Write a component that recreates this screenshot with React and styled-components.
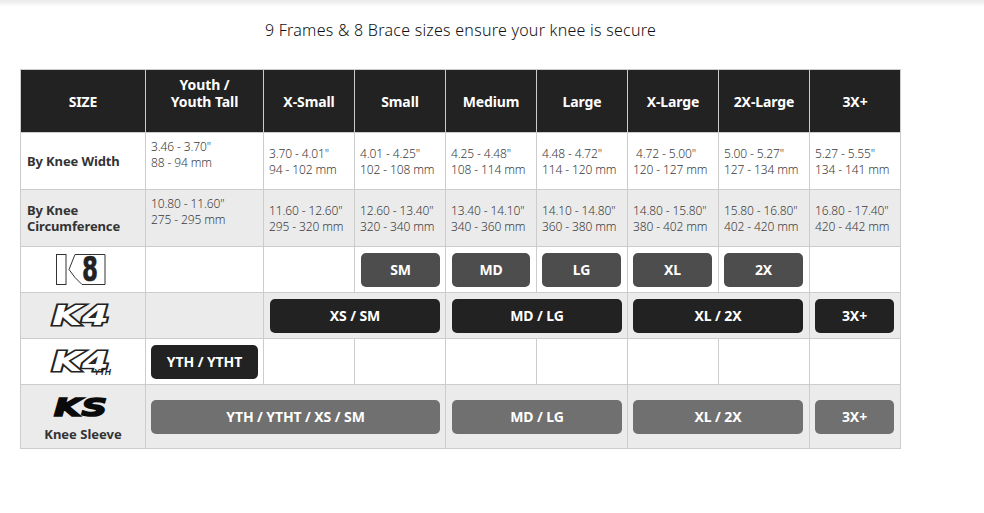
import styled, { createGlobalStyle } from "styled-components";

const GlobalStyle = createGlobalStyle`
  body {
    margin: 0;
    background: #fff;
    font-family: "Noto Sans", "Open Sans", sans-serif;
  }
`;

const sizes = ["X-Small", "Small", "Medium", "Large", "X-Large", "2X-Large", "3X+"];

const kneeWidth = [
  ['3.46 - 3.70"', "88 - 94 mm"],
  ['3.70 - 4.01"', "94 - 102 mm"],
  ['4.01 - 4.25"', "102 - 108 mm"],
  ['4.25 - 4.48"', "108 - 114 mm"],
  ['4.48 - 4.72"', "114 - 120 mm"],
  ['\u00a04.72 - 5.00"', "120 - 127 mm"],
  ['5.00 - 5.27"', "127 - 134 mm"],
  ['5.27 - 5.55"', "134 - 141 mm"],
];

const kneeCirc = [
  ['10.80 - 11.60"', "275 - 295 mm"],
  ['11.60 - 12.60"', "295 - 320 mm"],
  ['12.60 - 13.40"', "320 - 340 mm"],
  ['13.40 - 14.10"', "340 - 360 mm"],
  ['14.10 - 14.80"', "360 - 380 mm"],
  ['14.80 - 15.80"', "380 - 402 mm"],
  ['15.80 - 16.80"', "402 - 420 mm"],
  ['16.80 - 17.40"', "420 - 442 mm"],
];

const TopShade = styled.div`
  height: 0;
  box-shadow: 0 0 5px 3px rgba(0, 0, 0, 0.1);
`;

const Page = styled.div`
  width: 881px;
  padding: 19px 0 0 20px;
`;

const Title = styled.h2`
  margin: 0 0 28px;
  text-align: center;
  font-size: 16px;
  line-height: 22px;
  font-weight: 300;
  letter-spacing: 0.25px;
  color: #111;
`;

const Chart = styled.table`
  width: 881px;
  table-layout: fixed;
  border-collapse: collapse;
`;

const Row = styled.tr`
  height: ${(p) => p.$h}px;
  background: ${(p) => (p.$shaded ? "#ebebeb" : "#fff")};
`;

const Head = styled.th`
  padding: 0 0 ${(p) => p.$lift || 0}px;
  background: #222;
  border: 1px solid #ccc;
  color: #fff;
  font-size: 14px;
  line-height: 17px;
  font-weight: 700;
  letter-spacing: -0.1px;
  text-align: center;
  vertical-align: middle;
`;

const Label = styled.td`
  padding: 0 6px;
  border: 1px solid #ccc;
  color: #333;
  font-size: 13px;
  line-height: 16px;
  font-weight: 700;
  letter-spacing: -0.12px;
`;

const Measure = styled.td`
  padding: ${(p) => (p.$raised ? "0 0 12px 5px" : "1px 0 0 5px")};
  border: 1px solid #ccc;
  color: #3c3c3c;
  font-size: 12px;
  line-height: 16px;
  font-weight: 300;
  letter-spacing: -0.12px;
  white-space: nowrap;
`;

const LogoCell = styled.td`
  padding: ${(p) => p.$pad || 0}px 0 0;
  border: 1px solid #ccc;
  text-align: center;
  vertical-align: ${(p) => (p.$pad ? "top" : "middle")};
`;

const LogoMark = styled.svg`
  display: block;
  margin: 0 auto;
  padding-right: 4px;
  overflow: visible;
`;

const LogoCaption = styled.div`
  margin-top: 7px;
  color: #333;
  font-size: 13px;
  line-height: 16px;
  font-weight: 700;
`;

const Cell = styled.td`
  padding: 0 ${(p) => p.$pr ?? 5}px 0 ${(p) => p.$pl ?? 6}px;
  border: 1px solid #ccc;
  vertical-align: middle;
`;

const SizeTag = styled.div`
  height: 34px;
  display: flex;
  align-items: center;
  justify-content: center;
  border-radius: 5px;
  background: ${(p) => p.$bg};
  color: #fff;
  font-size: 14px;
  font-weight: 700;
  letter-spacing: -0.1px;
`;

const K8Logo = () => (
  <LogoMark width="52" height="33" viewBox="0 0 52 33">
    <rect x="1.500" y="1.500" width="9.500" height="30" fill="#fff" stroke="#333" />
    <path d="M20 1.500H50V31.500H27L20 24.500L14 16.500Z" fill="#fff" stroke="#333" />
    <text
      x="27"
      y="28"
      fontFamily="DejaVu Sans"
      fontWeight="700"
      fontSize="33"
      textLength="16"
      lengthAdjust="spacingAndGlyphs"
      stroke="#222"
      strokeWidth="0.6"
      fill="#222"
    >
      8
    </text>
  </LogoMark>
);

const K4Logo = ({ yth }) => (
  <LogoMark width="62" height="24" viewBox="0 0 62 24">
    <text
      x="2"
      y="21"
      fontFamily="DejaVu Sans"
      fontWeight="700"
      fontStyle="oblique"
      fontSize="26"
      textLength="57"
      lengthAdjust="spacingAndGlyphs"
      fill="#fff"
      stroke="#222"
      strokeWidth="3"
      paintOrder="stroke"
    >
      K4
    </text>
    {yth && (
      <text
        x="44"
        y="25"
        fontFamily="Liberation Sans"
        fontWeight="700"
        fontStyle="italic"
        fontSize="9"
        textLength="17"
        lengthAdjust="spacingAndGlyphs"
        fill="#222"
      >
        YTH
      </text>
    )}
  </LogoMark>
);

const KsLogo = () => (
  <LogoMark width="58" height="22" viewBox="0 0 58 22">
    <text
      x="2"
      y="19"
      fontFamily="DejaVu Sans"
      fontWeight="700"
      fontStyle="oblique"
      fontSize="24"
      textLength="53"
      lengthAdjust="spacingAndGlyphs"
      fill="#0a0a0a"
      stroke="#0a0a0a"
      strokeWidth="1.6"
    >
      KS
    </text>
  </LogoMark>
);

const MeasureRow = ({ label, values, shaded }) => (
  <Row $h={57} $shaded={shaded}>
    <Label>{label}</Label>
    {values.map((v, i) => (
      <Measure key={i} $raised={i === 0}>
        {v[0]}
        <br />
        {v[1]}
      </Measure>
    ))}
  </Row>
);

export default function App() {
  return (
    <>
      <GlobalStyle />
      <TopShade />
      <Page>
        <Title>9 Frames &amp; 8 Brace sizes ensure your knee is secure</Title>
        <Chart>
          <colgroup>
            <col style={{ width: 125 }} />
            <col style={{ width: 118 }} />
            {sizes.map((s) => (
              <col key={s} style={{ width: 91 }} />
            ))}
          </colgroup>
          <tbody>
            <Row $h={63}>
              <Head>SIZE</Head>
              <Head $lift={16}>
                Youth /
                <br />
                Youth Tall
              </Head>
              {sizes.map((s) => (
                <Head key={s}>{s}</Head>
              ))}
            </Row>
            <MeasureRow label="By Knee Width" values={kneeWidth} />
            <MeasureRow
              label={
                <>
                  By Knee
                  <br />
                  Circumference
                </>
              }
              values={kneeCirc}
              shaded
            />
            <Row $h={46}>
              <LogoCell>
                <K8Logo />
              </LogoCell>
              <Cell />
              <Cell />
              <Cell>
                <SizeTag $bg="#4d4d4d">SM</SizeTag>
              </Cell>
              <Cell $pr={6}>
                <SizeTag $bg="#4d4d4d">MD</SizeTag>
              </Cell>
              {["LG", "XL", "2X"].map((t) => (
                <Cell key={t} $pl={5} $pr={6}>
                  <SizeTag $bg="#4d4d4d">{t}</SizeTag>
                </Cell>
              ))}
              <Cell />
            </Row>
            <Row $h={46} $shaded>
              <LogoCell>
                <K4Logo />
              </LogoCell>
              <Cell />
              <Cell colSpan={2}>
                <SizeTag $bg="#222">XS / SM</SizeTag>
              </Cell>
              <Cell colSpan={2}>
                <SizeTag $bg="#222">MD / LG</SizeTag>
              </Cell>
              <Cell colSpan={2} $pl={5} $pr={6}>
                <SizeTag $bg="#222">XL / 2X</SizeTag>
              </Cell>
              <Cell $pl={5} $pr={6}>
                <SizeTag $bg="#222">3X+</SizeTag>
              </Cell>
            </Row>
            <Row $h={46}>
              <LogoCell>
                <K4Logo yth />
              </LogoCell>
              <Cell $pl={5}>
                <SizeTag $bg="#222">YTH / YTHT</SizeTag>
              </Cell>
              {sizes.map((s) => (
                <Cell key={s} />
              ))}
            </Row>
            <Row $h={64} $shaded>
              <LogoCell $pad={12}>
                <KsLogo />
                <LogoCaption>Knee Sleeve</LogoCaption>
              </LogoCell>
              <Cell colSpan={3} $pl={5}>
                <SizeTag $bg="#707070">YTH / YTHT / XS / SM</SizeTag>
              </Cell>
              <Cell colSpan={2}>
                <SizeTag $bg="#707070">MD / LG</SizeTag>
              </Cell>
              <Cell colSpan={2} $pl={5} $pr={6}>
                <SizeTag $bg="#707070">XL / 2X</SizeTag>
              </Cell>
              <Cell $pl={5} $pr={6}>
                <SizeTag $bg="#707070">3X+</SizeTag>
              </Cell>
            </Row>
          </tbody>
        </Chart>
      </Page>
    </>
  );
}
